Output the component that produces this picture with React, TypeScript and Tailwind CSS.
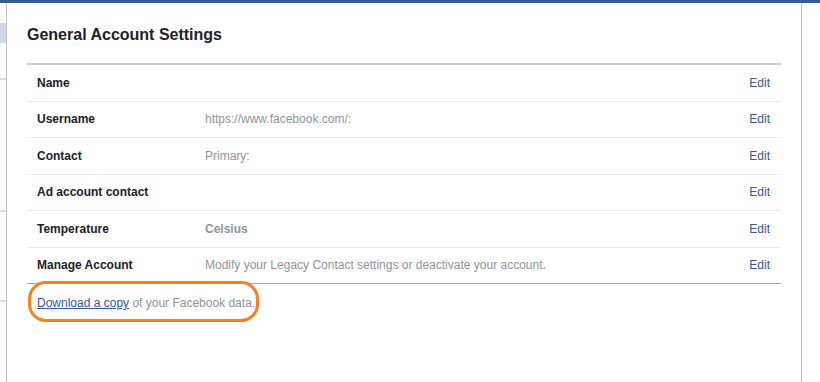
import React from "react";

type Row = {
  label: string;
  value?: string;
  strong?: boolean;
};

const rows: Row[] = [
  { label: "Name" },
  { label: "Username", value: "https://www.facebook.com/:" },
  { label: "Contact", value: "Primary:" },
  { label: "Ad account contact" },
  { label: "Temperature", value: "Celsius", strong: true },
  { label: "Manage Account", value: "Modify your Legacy Contact settings or deactivate your account." },
];

export default function App() {
  return (
    <div className="flex h-[382px] w-[820px] flex-col overflow-hidden bg-white font-['Liberation_Sans',Arial,sans-serif]">
      <div className="h-[3px] bg-[#3b5998]" />
      <div className="flex flex-1">
        {/* left nav sliver */}
        <div className="flex w-[7px] flex-col border-r border-[#c4c4c4]">
          <div className="h-[20px]" />
          <div className="h-[20px] bg-[#cfd9ea]" />
          <div className="h-[35px]" />
          <div className="h-[2px] bg-[#dcdcdc]" />
          <div className="h-[130px]" />
          <div className="h-[2px] bg-[#dcdcdc]" />
          <div className="h-[88px]" />
          <div className="h-[2px] bg-[#dcdcdc]" />
        </div>

        <div className="flex-1 border-r border-[#c4c4c4] pl-[20px] pr-[20px]">
          <h2 className="pt-[22px] pb-[18px] text-[16px] font-bold leading-[20px] text-[#1d2129]">
            General Account Settings
          </h2>
          <div className="border-t-2 border-[#cccccc]">
            {rows.map((row, i) => (
              <div
                key={row.label}
                className={
                  i === rows.length - 1
                    ? "flex h-[36.5px] items-center border-b border-[#a9a9a9] px-[10px] text-[12px]"
                    : "flex h-[36.5px] items-center border-b border-[#e9ebee] px-[10px] text-[12px]"
                }
              >
                <div className="w-[168px] font-bold text-[#1d2129]">{row.label}</div>
                <div
                  className={
                    row.strong
                      ? "flex-1 text-[12px] font-bold text-[#90949c]"
                      : "flex-1 text-[#90949c]"
                  }
                >
                  {row.value}
                </div>
                <a className="mr-[1px] text-[#365899]">Edit</a>
              </div>
            ))}
          </div>

          <div className="relative mt-[11px] pl-[10px] text-[12px] leading-[16px] text-[#90949c]">
            <a className="text-[#365899] underline">Download a copy</a> of your Facebook data.
            <div className="pointer-events-none absolute left-[1px] top-[-14px] h-[41px] w-[231px] rounded-[18px] border-[3px] border-[#f4801f]" />
          </div>
        </div>

        <div className="w-[18px]" />
      </div>
    </div>
  );
}
